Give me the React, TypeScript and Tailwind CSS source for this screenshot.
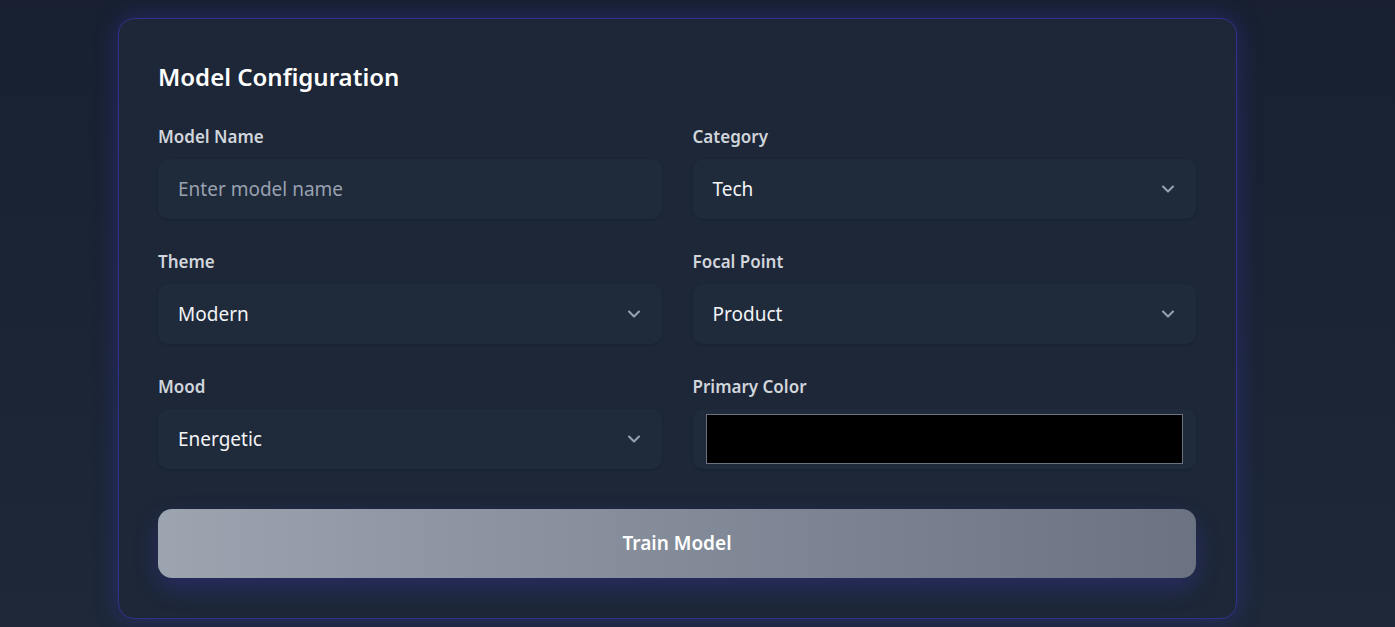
import { ChevronDown } from 'lucide-react';

const font = { fontFamily: '"Noto Sans", "Open Sans", sans-serif' };

function Field({ label, children }: { label: string; children: React.ReactNode }) {
    return (
        <div className="flex flex-col gap-[10px]">
            <label className="text-[17px] leading-6 font-semibold text-gray-300">{label}</label>
            {children}
        </div>
    );
}

function SelectBox({ value }: { value: string }) {
    return (
        <div className="flex h-[60px] items-center justify-between rounded-[10px] bg-[#1f2a3b] pr-[18px] pl-5 shadow-sm">
            <span className="text-[19px] text-gray-100">{value}</span>
            <ChevronDown className="h-5 w-5 text-gray-400" strokeWidth={2.5} />
        </div>
    );
}

export default function App() {
    return (
        <div
            className="min-h-[627px] w-full bg-gradient-to-b from-[#182031] to-[#1e2839] pt-[18px]"
            style={font}
        >
            <div className="mx-[118px] w-[1119px] rounded-2xl border border-[#33308a] bg-[#1d2737] pt-[38px] pr-10 pb-10 pl-[39px] shadow-[0_0_24px_rgba(67,56,202,0.35)]">
                <h2 className="mb-[28px] text-[24px] leading-10 font-semibold text-white">Model Configuration</h2>

                <div className="grid grid-cols-2 gap-x-[31px] gap-y-[31px]">
                    <Field label="Model Name">
                        <div className="flex h-[60px] items-center rounded-[10px] bg-[#1f2a3b] px-5 shadow-sm">
                            <span className="text-[19px] text-gray-400">Enter model name</span>
                        </div>
                    </Field>
                    <Field label="Category">
                        <SelectBox value="Tech" />
                    </Field>
                    <Field label="Theme">
                        <SelectBox value="Modern" />
                    </Field>
                    <Field label="Focal Point">
                        <SelectBox value="Product" />
                    </Field>
                    <Field label="Mood">
                        <SelectBox value="Energetic" />
                    </Field>
                    <Field label="Primary Color">
                        <div className="flex h-[60px] items-center rounded-[10px] bg-[#1f2a3b] px-[13px] shadow-sm">
                            <div className="h-[50px] w-full border border-gray-500 bg-black" />
                        </div>
                    </Field>
                </div>

                <button className="mt-[40px] flex h-[69px] w-full items-center justify-center rounded-[14px] bg-gradient-to-r from-[#9ca4b0] to-[#6b7282] text-[19px] font-semibold text-white shadow-[0_10px_24px_rgba(67,56,202,0.3)]">
                    Train Model
                </button>
            </div>
        </div>
    );
}
